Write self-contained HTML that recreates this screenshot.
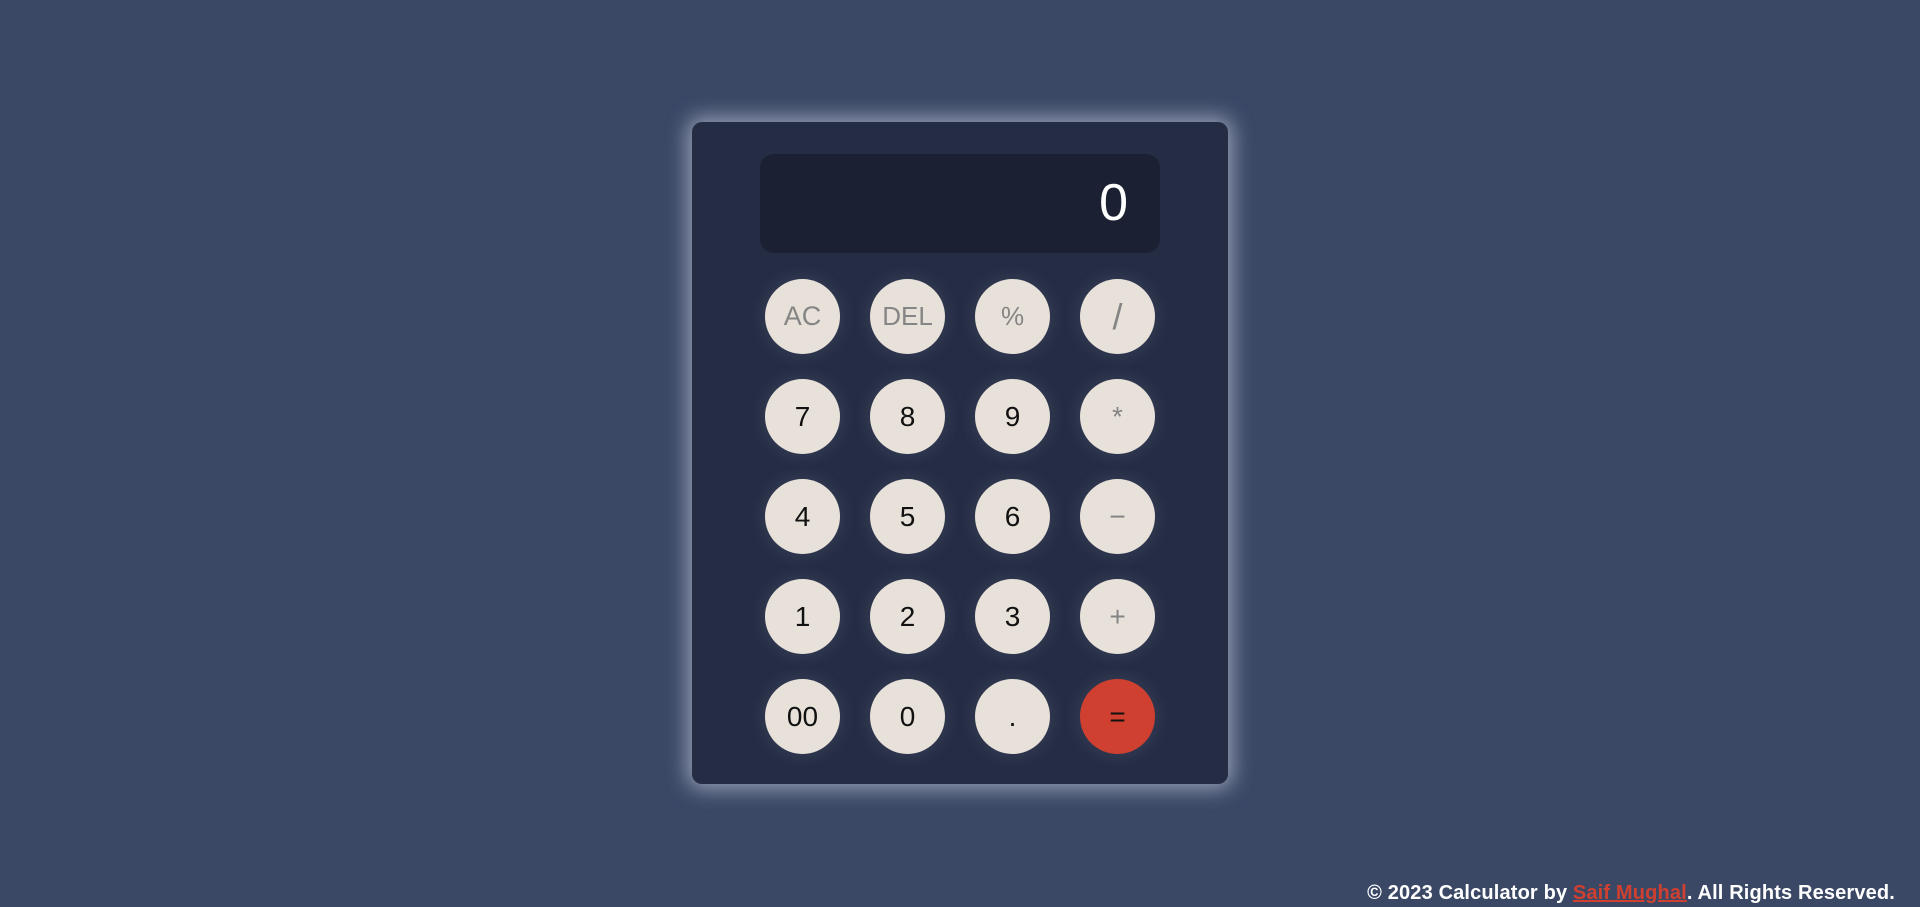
<!DOCTYPE html>
<html><head><meta charset="utf-8"><style>
html,body{margin:0;padding:0}
body{width:1920px;height:907px;background:#3a4866;position:relative;overflow:hidden;font-family:"Liberation Sans",sans-serif}
.calc{position:absolute;left:692px;top:122px;width:536px;height:662px;background:#252d45;border-radius:10px;box-shadow:0 0 20px 5px rgba(220,225,240,0.55)}
.disp{position:absolute;left:68px;top:32px;width:400px;height:99px;background:#1b2133;border-radius:14px;color:#fff;font-size:52px;text-align:right;box-sizing:border-box;padding-right:32px;line-height:99px}
.b{position:absolute;width:75px;height:75px;border-radius:50%;background:#e8e1d9;text-align:center;line-height:75px;font-size:28px;color:#111;box-shadow:0 0 16px 3px rgba(200,210,230,0.1)}
.g{color:#858585}
.eq{background:#d04030}
.foot{position:absolute;right:25px;top:882px;color:#fff;font-size:20px;font-weight:bold;letter-spacing:0.15px}
.foot a{color:#d04030;text-decoration:underline}
</style></head><body>
<div class="calc">
<div class="disp">0</div>
<div class="b g" style="left:73px;top:157px;font-size:27px">AC</div>
<div class="b g" style="left:178px;top:157px;font-size:26px">DEL</div>
<div class="b g" style="left:283px;top:157px;font-size:26px">%</div>
<div class="b g" style="left:388px;top:157px;font-size:36px">/</div>
<div class="b" style="left:73px;top:257px">7</div>
<div class="b" style="left:178px;top:257px">8</div>
<div class="b" style="left:283px;top:257px">9</div>
<div class="b g" style="left:388px;top:257px">*</div>
<div class="b" style="left:73px;top:357px">4</div>
<div class="b" style="left:178px;top:357px">5</div>
<div class="b" style="left:283px;top:357px">6</div>
<div class="b g" style="left:388px;top:357px">−</div>
<div class="b" style="left:73px;top:457px">1</div>
<div class="b" style="left:178px;top:457px">2</div>
<div class="b" style="left:283px;top:457px">3</div>
<div class="b g" style="left:388px;top:457px">+</div>
<div class="b" style="left:73px;top:557px">00</div>
<div class="b" style="left:178px;top:557px">0</div>
<div class="b" style="left:283px;top:557px">.</div>
<div class="b eq" style="left:388px;top:557px">=</div>
</div>
<div class="foot">© 2023 Calculator by <a>Saif Mughal</a>. All Rights Reserved.</div>
</body></html>
